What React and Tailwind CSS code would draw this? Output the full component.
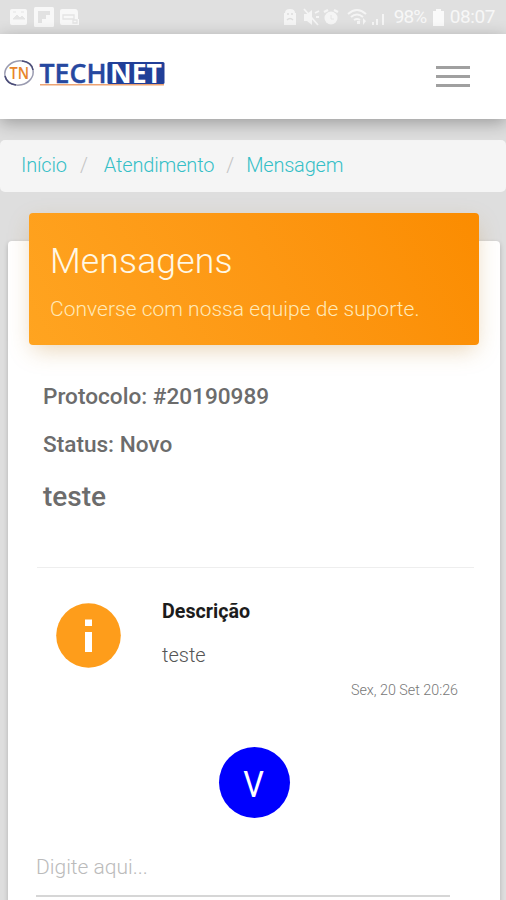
import React, { useState } from "react";

function StatusBar() {
  return (
    <div className="flex h-[34px] items-center bg-[#e0e0e0] pl-[10px] pr-[11px] text-[#f7f7f7]">
      <svg className="h-[34px] w-[72px]" viewBox="0 0 72 34">
        <rect x="0" y="9" width="17" height="16" rx="2" fill="#f8f8f8" />
        <path d="M3 19l4-4 3 3 2-2 3 3zM3 12h3M11 12h3" fill="#e4e4e4" stroke="#e4e4e4" />
        <rect x="24" y="7" width="20" height="20" rx="1.5" fill="#f8f8f8" />
        <path d="M28 11h12v4h-4v4h-4v4h-4z" fill="#e2e2e2" />
        <path d="M52 9h13q3 0 3 4v6h1v6H52q-2 0-2-2V11q0-2 2-2z" fill="#f8f8f8" />
        <path d="M53 15h11v4H53zM63 20h4v3h-4z" fill="none" stroke="#e4e4e4" strokeWidth="1.3" />
      </svg>
      <svg className="ml-auto h-[34px] w-[110px] shrink-0" viewBox="0 0 110 34" fill="#f5f5f5">
        <path d="M3 13q0-4 5-4t5 4h1v12H2V13z" />
        <path d="M5 14h2M9 14h2M5 20q3-3 6 0" stroke="#ddd" strokeWidth="1.5" fill="none" />
        <path d="M22 14h3l5-4v15l-5-4h-3z" />
        <path d="M22 9l14 16M33 13l4-2M34 17h3" stroke="#f5f5f5" strokeWidth="1.8" />
        <circle cx="49" cy="18" r="6.500" />
        <path d="M42 12l4-2M56 12l-4-2" stroke="#f5f5f5" strokeWidth="2.500" />
        <path d="M49 15v4h3" stroke="#e4e4e4" fill="none" />
        <path d="M66 14q9-8 18 0M69 17q6-5 12 0M72 20q3-2 6 0" stroke="#f5f5f5" strokeWidth="2" fill="none" />
        <path d="M75 21h3v3h-3zM81 18l3 3-3 4z" />
        <path d="M90 22h2v3h-2zM94 19h2v6h-2zM100 14h2v11h-2z" />
      </svg>
      <span className="ml-[2px] w-[34px] whitespace-nowrap pt-px text-[19px] tracking-[-0.9px]">98%</span>
      <svg className="ml-[5px] h-[17px] w-[11px] shrink-0" viewBox="0 0 11 17" fill="#fafafa">
        <path d="M3 0h5v2h3v15H0V2h3z" />
      </svg>
      <span className="ml-[6px] whitespace-nowrap pt-px text-[19px] tracking-[-0.4px]">08:07</span>
    </div>
  );
}

function Logo() {
  return (
    <svg className="h-[44px] w-[170px]" viewBox="0 -6 170 44" aria-label="Technet">
      <ellipse cx="16" cy="16" rx="14.300" ry="12" fill="none" stroke="#9a9bb0" strokeWidth="1.5" transform="rotate(-12 16 16)" />
      <path d="M2 19q2 8 11 9M19 4q10 1 11 9" fill="none" stroke="#4a4c78" strokeWidth="1.5" />
      <text x="6.500" y="22" fontSize="16" fontWeight="600" fill="#e8842c" fontFamily="Open Sans, sans-serif" textLength="19.500" lengthAdjust="spacingAndGlyphs">TN</text>
      <rect x="104.500" y="5" width="57" height="22" rx="1.5" fill="#213f98" />
      <rect x="37" y="27" width="124" height="1.500" fill="#eda372" />
      <text x="36.500" y="26" fontSize="27" fontWeight="600" fill="#2648a0" stroke="#2648a0" strokeWidth="0.4" fontFamily="Open Sans, sans-serif" textLength="67" lengthAdjust="spacingAndGlyphs">TECH</text>
      <text x="107" y="25.500" fontSize="26" fontWeight="700" fill="#fff" fontFamily="Open Sans, sans-serif" textLength="52" lengthAdjust="spacingAndGlyphs">NET</text>
    </svg>
  );
}

function Navbar() {
  return (
    <header className="relative flex h-[85px] items-center bg-white pl-[3px] pr-[36px] shadow-[0_4px_16px_rgba(0,0,0,0.3)]">
      <div className="pb-[7px]">
        <Logo />
      </div>
      <button type="button" aria-label="Menu" className="ml-auto flex flex-col gap-[6px]">
        <span className="h-[3px] w-[34px] bg-[#a0a0a0]" />
        <span className="h-[3px] w-[34px] bg-[#a0a0a0]" />
        <span className="h-[3px] w-[34px] bg-[#a0a0a0]" />
      </button>
    </header>
  );
}

function Breadcrumb() {
  return (
    <nav className="mt-[21px] flex h-[52px] items-center rounded-[5px] bg-[#f5f5f5] pb-[2px] pl-[21px] text-[20px] tracking-[-0.15px] font-light text-[#35bfc7]">
      <a>Início</a>
      <span className="ml-[13px] text-[#c4c4c4]">/</span>
      <a className="ml-[16px]">Atendimento</a>
      <span className="ml-[12px] text-[#c4c4c4]">/</span>
      <a className="ml-[12px] tracking-[-0.2px]">Mensagem</a>
    </nav>
  );
}

function Message({ title, text, date }) {
  return (
    <div className="flex pl-[20px] pt-[34px]">
      <svg className="mt-px h-[65px] w-[65px] shrink-0" viewBox="0 0 65 65">
        <circle cx="32.500" cy="32.500" r="32.300" fill="#fe9d1b" />
        <path d="M29 16.500h7v6.500h-7zM29 29h7v20h-7z" fill="#fff" />
      </svg>
      <div className="ml-[41px] flex-1 pr-[14px]">
        <h4 className="mt-[-4px] text-[19.700px] leading-[28px] font-bold text-[#1c1c1c]">{title}</h4>
        <p className="mt-[14px] text-[20px] leading-[30px] font-light text-[#555]">{text}</p>
        <p className="mt-[10px] text-right text-[14.300px] leading-[20px] font-light text-[#777]">{date}</p>
      </div>
    </div>
  );
}

export default function App() {
  const [draft, setDraft] = useState("");

  return (
    <div className="h-[900px] w-full overflow-hidden bg-[#dedede] font-['Roboto',sans-serif]">
      <StatusBar />
      <Navbar />
      <Breadcrumb />

      <main className="mx-[8px] mr-[6px] mt-[49px] h-[680px] rounded-[4px] bg-white px-[21px] shadow-[0_2px_5px_rgba(0,0,0,0.2)]">
        <div className="relative -top-[28px] h-[132px] rounded-[4px] bg-linear-60 from-[#ffa420] to-[#fb8c00] px-[21px] pt-[27px] shadow-[0_8px_22px_-4px_rgba(190,130,40,0.35)]">
          <h1 className="text-[35.500px] leading-[42px] tracking-[0.15px] font-light text-[#fff8e5]">Mensagens</h1>
          <p className="mt-[12px] text-[21px] leading-[30px] tracking-[0.02px] font-light whitespace-nowrap text-[#ffe9b8]">
            Converse com nossa equipe de suporte.
          </p>
        </div>

        <section className="-mt-[5px] ml-[8px] mr-[5px] h-[200px] border-b border-[#eee] pl-[6px] pt-[15px] font-medium text-[#6c6c6c]">
          <p className="text-[22.600px] leading-[28px]">Protocolo: #20190989</p>
          <p className="mt-[20px] text-[22.600px] leading-[28px]">Status: Novo</p>
          <h2 className="mt-[20px] text-[28px] leading-[36px]">teste</h2>
        </section>

        <div className="mx-[7px]">
          <Message title="Descrição" text="teste" date="Sex, 20 Set 20:26" />
          <div className="mx-auto mt-[47px] flex size-[71px] items-center justify-center rounded-full bg-[#0000fe] pt-[4px] text-[36px] text-white">
            <span className="-ml-px scale-x-[0.9]">V</span>
          </div>
          <input
            className="mt-[20px] h-[59px] w-[414px] border-b-2 border-[#d6d6d6] text-[21px] font-light outline-none placeholder:text-[#bbb]"
            placeholder="Digite aqui..."
            value={draft}
            onChange={(e) => setDraft(e.target.value)}
          />
        </div>
      </main>
    </div>
  );
}
